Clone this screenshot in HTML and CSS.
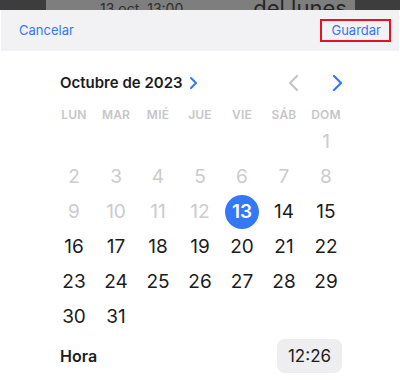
FILE: index.html
```html
<!DOCTYPE html>
<html lang="es">
<head>
<meta charset="utf-8">
<link rel="stylesheet" href="styles.css">
</head>
<body>
<div class="page">
  <div class="behind">
    <div class="behind-sheet">
      <span class="behind-date">13 oct, 13:00</span>
      <span class="behind-title">del lunes</span>
    </div>
  </div>
  <div class="header">
    <span class="link">Cancelar</span>
    <span class="link save">Guardar</span>
  </div>
  <div class="calendar">
    <div class="month-row">
      <div class="month-title">Octubre de 2023
        <svg class="title-chev" width="7" height="12" viewBox="0 0 7 12"><path d="M1 1 L6 6 L1 11" fill="none" stroke="#3478f6" stroke-width="2" stroke-linecap="round" stroke-linejoin="round"/></svg>
      </div>
      <div class="nav">
        <span class="nav-btn"><svg width="11" height="16" viewBox="0 0 11 16"><path d="M9 1 L2 8 L9 15" fill="none" stroke="#c4c4c6" stroke-width="2.2" stroke-linecap="round" stroke-linejoin="round"/></svg></span>
        <span class="nav-btn"><svg width="11" height="16" viewBox="0 0 11 16"><path d="M2 1 L9 8 L2 15" fill="none" stroke="#3478f6" stroke-width="2.2" stroke-linecap="round" stroke-linejoin="round"/></svg></span>
      </div>
    </div>
    <div class="grid weekdays">
      <span>LUN</span><span>MAR</span><span>MIÉ</span><span>JUE</span><span>VIE</span><span>SÁB</span><span>DOM</span>
    </div>
    <div class="grid days">
      <span></span><span></span><span></span><span></span><span></span><span></span><span class="off">1</span>
      <span class="off">2</span><span class="off">3</span><span class="off">4</span><span class="off">5</span><span class="off">6</span><span class="off">7</span><span class="off">8</span>
      <span class="off">9</span><span class="off">10</span><span class="off">11</span><span class="off">12</span><span class="sel"><b>13</b></span><span>14</span><span>15</span>
      <span>16</span><span>17</span><span>18</span><span>19</span><span>20</span><span>21</span><span>22</span>
      <span>23</span><span>24</span><span>25</span><span>26</span><span>27</span><span>28</span><span>29</span>
      <span>30</span><span>31</span>
    </div>
    <div class="time-row">
      <span class="time-label">Hora</span>
      <span class="time-pill">12:26</span>
    </div>
  </div>
</div>
</body>
</html>
```
FILE: styles.css
```css
* { box-sizing: border-box; }
html, body { margin: 0; padding: 0; background: #fff; }
body { font-family: Inter, "Noto Sans", sans-serif; color: #1c1c1e; }
.page { width: 400px; height: 380px; overflow: hidden; background: #fff; }

.behind { height: 10px; background: #3d3d3d; padding: 0 45px 0 46px; }
.behind-sheet { height: 10px; background: #7e7e7e; overflow: hidden; display: flex; align-items: flex-start; padding-left: 54px; }
.behind-date { font-size: 14px; line-height: 14px; color: #2e2e2e; margin-top: 2px; }
.behind-title { font-size: 22px; line-height: 22px; color: #262626; margin-left: 70px; margin-top: -3px; }

.header { height: 41px; background: #f2f2f4; display: flex; align-items: center; justify-content: space-between; padding: 0 8px 0 18px; margin: 0 1px; }
.link { font-size: 13px; color: #3478f6; line-height: 19px; }
.save { border: 2px solid #e8111f; padding: 0 8px 0 9px; }

.calendar { width: 294px; margin-left: 53px; }
.month-row { display: flex; align-items: center; justify-content: space-between; height: 53px; padding: 11px 0 0 7px; }
.month-title { font-size: 15px; font-weight: 600; display: flex; align-items: center; gap: 7px; line-height: 20px; }
.nav { display: flex; gap: 24px; }
.nav-btn { width: 20px; height: 20px; display: flex; align-items: center; justify-content: center; }

.grid { display: grid; grid-template-columns: repeat(7, 42px); }
.weekdays { height: 20px; align-items: center; }
.weekdays span { text-align: center; font-size: 12px; font-weight: 600; color: #c6c6c8; letter-spacing: 0.2px; }
.days span { height: 35px; display: flex; align-items: center; justify-content: center; font-size: 19px; }
.days .off { color: #cbcbcd; }
.days .sel b { width: 34px; height: 34px; border-radius: 50%; background: #3478f6; color: #fff; font-weight: 600; display: flex; align-items: center; justify-content: center; }

.time-row { display: flex; align-items: center; justify-content: space-between; margin-top: 5px; padding: 0 5px 0 7px; }
.time-label { font-size: 16px; font-weight: 600; }
.time-pill { width: 65px; height: 34px; border-radius: 8px; background: #eeeef0; display: flex; align-items: center; justify-content: center; font-size: 17px; }
```
